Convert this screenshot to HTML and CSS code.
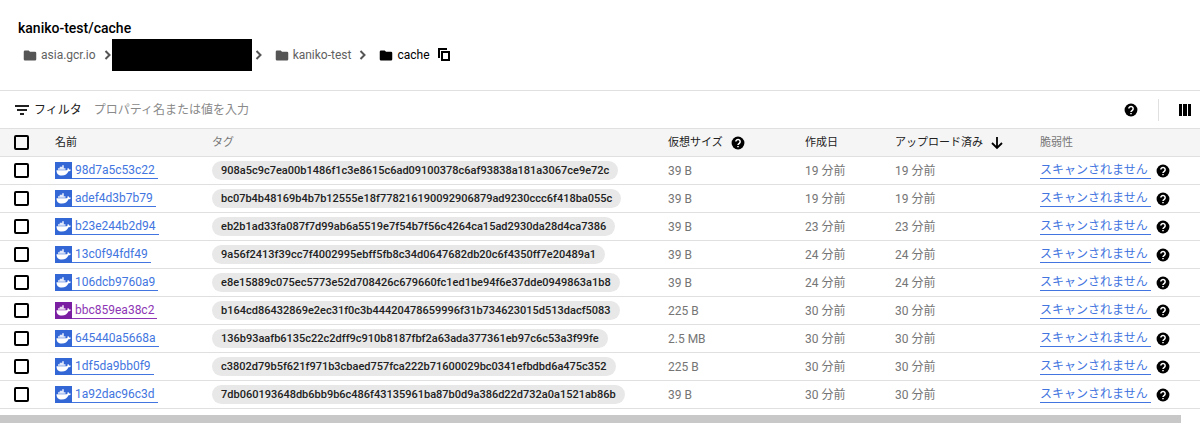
FILE: index.html
```html
<!DOCTYPE html>
<html lang="ja">
<head>
    <meta charset="UTF-8" />
    <meta name="viewport" content="width=device-width, initial-scale=1" />
    <title>kaniko-test/cache</title>
    <link rel="stylesheet" href="styles.css">
</head>
<body>
    <!-- Shared icons -->
    <svg class="sprite" aria-hidden="true">
        <symbol id="icon-folder" viewBox="0 0 24 24">
            <path fill="currentColor" d="M10 4H4a2 2 0 0 0-2 2v12a2 2 0 0 0 2 2h16a2 2 0 0 0 2-2V8a2 2 0 0 0-2-2h-8z" />
        </symbol>
        <symbol id="icon-chevron" viewBox="0 0 8 12">
            <path fill="none" stroke="currentColor" stroke-width="2" d="M1.5 2l4 4-4 4" />
        </symbol>
        <symbol id="icon-help" viewBox="0 0 24 24">
            <path fill="currentColor" d="M12 1a11 11 0 1 0 0 22 11 11 0 0 0 0-22z" />
            <path fill="none" stroke="#fff" stroke-width="2.6" d="M8.3 9.6a3.7 3.7 0 1 1 6.3 2.6c-1.4 1.2-2.6 1.6-2.6 3.4" />
            <path fill="#fff" d="M10.7 17h2.6v2.4h-2.6z" />
        </symbol>
        <symbol id="icon-docker" viewBox="0 0 17 17">
            <path fill="#fff" d="M1.5 8.2H11.600C12.400 8.200 12.700 7.700 12.500 6.500L13.100 6C13.800 6.500 14 7 14.100 7.600C14.800 7.500 15.400 7.600 15.900 7.900C15.500 8.800 14.700 9.200 13.500 9.200C12.300 12 10.200 13.600 6.800 13.600C3.300 13.600 1.500 11.600 1.500 8.200Z" />
            <path fill="#fff" fill-opacity=".85" d="M3 6.200H10.500V7.800H3ZM4.700 4.800H8.800V6.200H4.700ZM7.200 3.200H8.800V4.800H7.200Z" />
        </symbol>
    </svg>

    <header class="page-header">
        <h1>kaniko-test/cache</h1>
        <nav class="breadcrumb">
            <a href="#" class="crumb"><svg class="folder"><use href="#icon-folder" /></svg>asia.gcr.io</a>
            <svg class="chevron"><use href="#icon-chevron" /></svg>
            <span class="redacted"></span>
            <svg class="chevron"><use href="#icon-chevron" /></svg>
            <a href="#" class="crumb nested"><svg class="folder"><use href="#icon-folder" /></svg>kaniko-test</a>
            <svg class="chevron"><use href="#icon-chevron" /></svg>
            <a href="#" class="crumb nested current"><svg class="folder"><use href="#icon-folder" /></svg>cache</a>
            <button type="button" class="icon-button copy" aria-label="コピー">
                <svg viewBox="0 0 13 14"><path fill="none" stroke="currentColor" stroke-width="2" d="M1 10V1h8M4 4h7v8H4z" /></svg>
            </button>
        </nav>
    </header>

    <div class="filter-bar">
        <svg class="filter-icon" viewBox="0 0 14 10"><path fill="currentColor" d="M0 0h14v2H0zM2 4h10v2H2zM5 8h4v2H5z" /></svg>
        <label for="filter">フィルタ</label>
        <input type="text" id="filter" placeholder="プロパティ名または値を入力" />
        <button type="button" class="icon-button" aria-label="ヘルプ"><svg class="help"><use href="#icon-help" /></svg></button>
        <span class="divider"></span>
        <button type="button" class="icon-button" aria-label="列の表示">
            <svg class="columns" viewBox="0 0 12 12"><path fill="currentColor" d="M0 0h3v12H0zM4 0h4v12H4zM9 0h3v12H9z" /></svg>
        </button>
    </div>

    <table class="images">
        <colgroup>
            <col class="col-check"><col class="col-name"><col class="col-tag"><col class="col-size"><col class="col-created"><col class="col-uploaded"><col>
        </colgroup>
        <thead>
            <tr>
                <th><input type="checkbox" aria-label="すべて選択" /></th>
                <th>名前</th>
                <th class="muted">タグ</th>
                <th><div class="cell">仮想サイズ<button type="button" class="icon-button" aria-label="ヘルプ"><svg class="help"><use href="#icon-help" /></svg></button></div></th>
                <th>作成日</th>
                <th><div class="cell">アップロード済み<button type="button" class="icon-button" aria-label="並べ替え"><svg class="arrow" viewBox="0 0 12 14"><path fill="none" stroke="currentColor" stroke-width="1.800" d="M6 1v11M1 7l5 5 5-5" /></svg></button></div></th>
                <th class="muted">脆弱性</th>
            </tr>
        </thead>
        <tbody id="rows"></tbody>
    </table>
    <div class="scrollbar"></div>

    <script src="script.js"></script>
</body>
</html>
```

FILE: script.js
```js
const images = [
    { name: '98d7a5c53c22', tag: '908a5c9c7ea00b1486f1c3e8615c6ad09100378c6af93838a181a3067ce9e72c', size: '39 B', time: '19 分前' },
    { name: 'adef4d3b7b79', tag: 'bc07b4b48169b4b7b12555e18f778216190092906879ad9230ccc6f418ba055c', size: '39 B', time: '19 分前' },
    { name: 'b23e244b2d94', tag: 'eb2b1ad33fa087f7d99ab6a5519e7f54b7f56c4264ca15ad2930da28d4ca7386', size: '39 B', time: '23 分前' },
    { name: '13c0f94fdf49', tag: '9a56f2413f39cc7f4002995ebff5fb8c34d0647682db20c6f4350ff7e20489a1', size: '39 B', time: '24 分前' },
    { name: '106dcb9760a9', tag: 'e8e15889c075ec5773e52d708426c679660fc1ed1be94f6e37dde0949863a1b8', size: '39 B', time: '24 分前' },
    { name: 'bbc859ea38c2', tag: 'b164cd86432869e2ec31f0c3b44420478659996f31b734623015d513dacf5083', size: '225 B', time: '30 分前', visited: true },
    { name: '645440a5668a', tag: '136b93aafb6135c22c2dff9c910b8187fbf2a63ada377361eb97c6c53a3f99fe', size: '2.5 MB', time: '30 分前' },
    { name: '1df5da9bb0f9', tag: 'c3802d79b5f621f971b3cbaed757fca222b71600029bc0341efbdbd6a475c352', size: '225 B', time: '30 分前' },
    { name: '1a92dac96c3d', tag: '7db060193648db6bb9b6c486f43135961ba87b0d9a386d22d732a0a1521ab86b', size: '39 B', time: '30 分前' }
];

document.getElementById('rows').innerHTML = images.map(image => `
    <tr>
        <td><input type="checkbox" aria-label="${image.name}" /></td>
        <td><a href="#" class="image-link${image.visited ? ' visited' : ''}"><svg class="docker"><use href="#icon-docker" /></svg><span>${image.name}</span></a></td>
        <td><span class="tag">${image.tag}</span></td>
        <td>${image.size}</td>
        <td>${image.time}</td>
        <td>${image.time}</td>
        <td><div class="cell scan"><a href="#">スキャンされません</a><button type="button" class="icon-button" aria-label="ヘルプ"><svg class="help"><use href="#icon-help" /></svg></button></div></td>
    </tr>
`).join('');
```

FILE: styles.css
```css
* {
    box-sizing: border-box;
}
body {
    margin: 0;
    background: #fff;
    color: #212121;
    font-family: Roboto, "Noto Sans CJK JP", sans-serif;
    font-size: 12px;
    line-height: 16px;
}
svg {
    display: block;
    flex: none;
}
a {
    color: #4275e0;
    text-decoration: none;
}
.sprite {
    display: none;
}
.icon-button {
    display: flex;
    padding: 0;
    border: none;
    background: none;
    color: #000;
    cursor: pointer;
}
.help {
    width: 14px;
    height: 14px;
}

/* Header */
.page-header {
    padding: 20px 18px 18px;
    border-bottom: 1px solid #e0e0e0;
}
h1 {
    margin: 0 0 2px;
    color: #000;
    font-size: 14px;
    font-weight: 500;
    line-height: 16px;
}
.breadcrumb {
    display: flex;
    align-items: center;
    height: 34px;
    padding-left: 4px;
    color: #555;
}
.crumb {
    display: flex;
    align-items: center;
    gap: 3px;
    margin-right: 8px;
    color: #616161;
}
.crumb.nested {
    margin-left: 11px;
}
.crumb.current {
    color: #000;
}
.folder {
    width: 16px;
    height: 15px;
    color: #555;
}
.current .folder {
    color: #000;
}
.chevron {
    width: 8px;
    height: 12px;
}
.redacted {
    width: 140px;
    height: 32px;
    margin-right: 3px;
    background: #000;
}
.copy svg {
    width: 13px;
    height: 14px;
}

/* Filter */
.filter-bar {
    display: flex;
    align-items: center;
    height: 37px;
    padding: 0 9px 0 15px;
}
.filter-icon {
    width: 14px;
    height: 10px;
    margin-right: 5px;
}
.filter-bar input {
    flex: 1;
    min-width: 0;
    margin-left: 12px;
    padding: 0;
    border: none;
    outline: none;
    font: inherit;
}
.filter-bar input::placeholder {
    color: #8a8a8a;
}
.divider {
    width: 1px;
    height: 22px;
    margin: 0 20px;
    background: #e0e0e0;
}
.columns {
    width: 12px;
    height: 12px;
}

/* Table */
.images {
    width: 100%;
    border-collapse: separate;
    border-spacing: 0;
    table-layout: fixed;
}
.col-check {
    width: 55px;
}
.col-name {
    width: 157px;
}
.col-tag {
    width: 456px;
}
.col-size {
    width: 137px;
}
.col-created {
    width: 90px;
}
.col-uploaded {
    width: 145px;
}
.images th,
.images td {
    height: 28px;
    padding: 0;
    border-bottom: 1px solid #e0e0e0;
    color: #757575;
    text-align: left;
    white-space: nowrap;
}
.images th {
    height: 29px;
    background: #f5f5f5;
    border-top: 1px solid #e0e0e0;
    color: #212121;
    font-size: 11px;
    font-weight: 400;
}
.images th.muted {
    color: #757575;
}
.images input {
    display: block;
    appearance: none;
    width: 15px;
    height: 15px;
    margin: 0 0 0 14px;
    border: 2px solid #000;
    border-radius: 2px;
}
.images input:checked {
    background: #3367d6;
}
.cell {
    display: flex;
    align-items: center;
    gap: 8px;
}
.arrow {
    width: 12px;
    height: 14px;
}
.image-link {
    display: flex;
    width: max-content;
}
.docker {
    width: 17px;
    height: 17px;
    background: #3367d6;
}
.image-link span {
    padding: 0 3px;
    border-bottom: 1px solid #4275e0;
}
.image-link.visited {
    color: #8e35b5;
}
.visited .docker {
    background: #7b1fa2;
}
.image-link.visited span {
    border-color: #8e35b5;
}
.tag {
    display: block;
    width: max-content;
    padding: 0 9px;
    border-radius: 10px;
    background: #e8e8e8;
    color: #212121;
    font-size: 11px;
    font-weight: 500;
    line-height: 19px;
}
.scan {
    gap: 5px;
}
.scan a {
    padding-right: 3px;
    border-bottom: 1px solid #4275e0;
}
.scrollbar {
    height: 8px;
    margin: 6px 19px 0 0;
    background: #c8c8c8;
}
```
